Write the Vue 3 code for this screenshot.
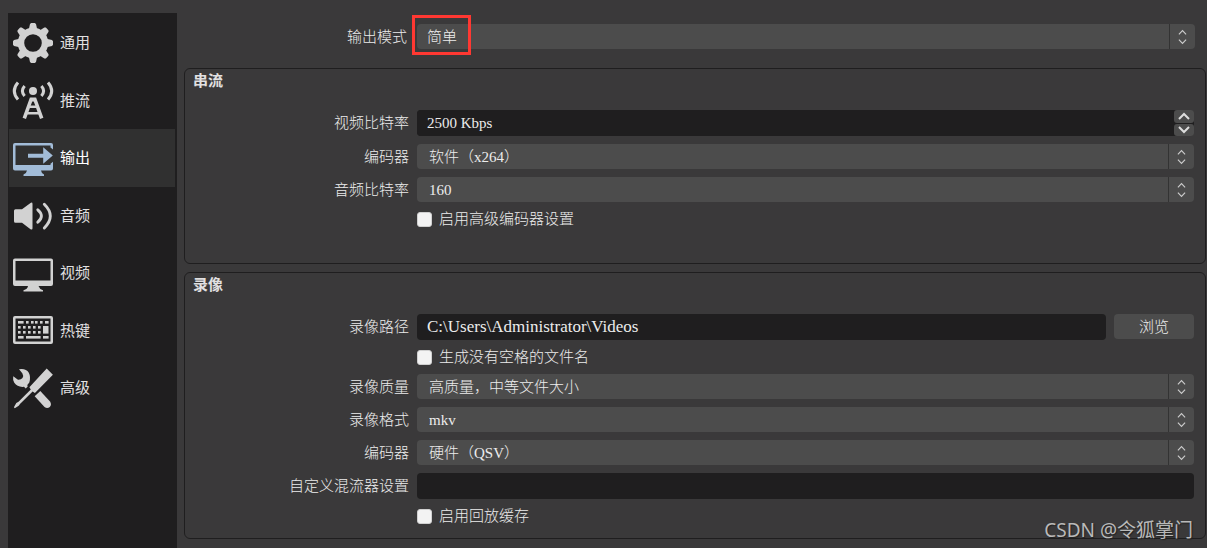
<script setup>
import { ref } from 'vue'

const tabs = [
  { id: 'general', label: '通用' },
  { id: 'stream', label: '推流' },
  { id: 'output', label: '输出' },
  { id: 'audio', label: '音频' },
  { id: 'video', label: '视频' },
  { id: 'hotkeys', label: '热键' },
  { id: 'advanced', label: '高级' },
]
const active = ref('output')

const keys = [
  [5, 10, 5], [13, 10, 2], [18, 10, 2], [22, 10, 2], [27, 10, 2], [32, 10, 3],
  [5, 15, 2], [10, 15, 2], [15, 15, 2], [20, 15, 2], [25, 15, 2],
  [5, 20, 2], [10, 20, 2], [15, 20, 2], [20, 20, 2], [25, 20, 2],
  [5, 25, 5], [13, 25, 14], [30, 25, 5],
]

const mode = ref('简单')
const videoBitrate = ref('2500 Kbps')
const encoder = ref('软件（x264）')
const audioBitrate = ref('160')
const advancedEncoder = ref(false)
const path = ref('C:\\Users\\Administrator\\Videos')
const noSpace = ref(false)
const quality = ref('高质量，中等文件大小')
const format = ref('mkv')
const recEncoder = ref('硬件（QSV）')
const muxer = ref('')
const replay = ref(false)

function step(delta) {
  videoBitrate.value = `${parseInt(videoBitrate.value, 10) + delta} Kbps`
}
</script>

<template>
  <div class="page">
    <nav class="sidebar">
      <button
        v-for="t in tabs"
        :key="t.id"
        type="button"
        class="tab"
        :class="{ active: t.id === active }"
        @click="active = t.id"
      >
        <svg class="icon" viewBox="0 0 40 40" aria-hidden="true">
          <g v-if="t.id === 'general'">
            <circle cx="20" cy="20" r="12" fill="none" stroke="currentColor" stroke-width="6.4" />
            <path
              v-for="n in 8"
              :key="n"
              d="M18.2 0h3.6l1.2 1 1 4.5 3 2.5h-14l3-2.5 1-4.5z"
              fill="currentColor"
              :transform="`rotate(${n * 45} 20 20)`"
            />
          </g>
          <g v-else-if="t.id === 'stream'">
            <circle cx="20" cy="10" r="4" fill="currentColor" />
            <g fill="none" stroke="currentColor">
              <path d="M11.6 5q-4.4 5 0 10M28.4 5q4.4 5 0 10" stroke-width="3" />
              <path d="M5 1.500q-7.400 8.500 0 17M35 1.500q7.400 8.500 0 17" stroke-width="3" />
              <path d="M18.600 17L11.300 37.400M21.400 17L28.700 37.400" stroke-width="3.600" />
              <path d="M17 25.700h6M14 32.200h12" stroke-width="2.600" />
            </g>
            <path d="M17.600 16.500h4.800l1 4h-6.800z" fill="currentColor" />
          </g>
          <g v-else-if="t.id === 'output'" fill="currentColor">
            <path d="M2 5h36a2 2 0 0 1 2 2v4.500l-2.500-2V7.500h-35V27h35v-1.300l2.500-2V30.500a2 2 0 0 1-2 2h-10q.5 3 3 4v1.500H10.500v-1.500q3-1 3.500-4H2a2 2 0 0 1-2-2V7a2 2 0 0 1 2-2z" />
            <path d="M15 15.700h15.200V9.300l9.600 8.200-9.600 8.200v-6H15z" />
          </g>
          <g v-else-if="t.id === 'audio'">
            <path d="M2.500 13.300H9L17.500 6.900q2-.9 2 1v24.400q0 1.800-2 1L9 26.700H2.500q-1.500 0-1.500-1.500V14.800q0-1.500 1.500-1.500z" fill="currentColor" />
            <path d="M24.800 13.800q7.200 6.200 0 12.400M31.300 8.200q12 11.800 0 23.800" fill="none" stroke="currentColor" stroke-width="2.900" stroke-linecap="round" />
          </g>
          <path
            v-else-if="t.id === 'video'"
            fill="currentColor"
            fill-rule="evenodd"
            d="M2 5.500h36a2 2 0 0 1 2 2V31a2 2 0 0 1-2 2H25.500q1 3.200 4.500 4.300v1.200H10.500v-1.200q4-1.100 4.500-4.300H2a2 2 0 0 1-2-2V7.500a2 2 0 0 1 2-2zM2.500 8v19.500h35V8z"
          />
          <g v-else-if="t.id === 'hotkeys'" fill="currentColor">
            <path fill-rule="evenodd" d="M2 5h36a2 2 0 0 1 2 2v24a2 2 0 0 1-2 2H2a2 2 0 0 1-2-2V7a2 2 0 0 1 2-2zM2.500 7.500v23h35v-23z" />
            <rect v-for="(k, i) in keys" :key="i" :x="k[0]" :y="k[1]" :width="k[2] + 0.6" height="2.600" />
            <rect x="30" y="15" width="5.500" height="7.600" />
          </g>
          <g v-else fill="currentColor">
            <path d="M6 1.300Q13 .2 15.800 4.800 18 9 16.300 14.500L14.300 17l.4 1.500-2 2-1.700-1.700Q4.500 19.500 1.300 14.800-.4 11.500.2 8.200L5 11.800q3 .2 4.500-1.800T9.300 5.200z" />
            <path d="M33.700 .6l6.200 6.200-18 18.200-2.300-1.500L7 36l-1.300 1.700L1.800 40.200.9 39.300 3.300 35l2.200-1.200L17.800 21.600l-1.400-2.300z" />
            <path d="M21.700 28.200l5.600-5.200L37 33.500q2 3.200-.2 5.500-2.500 1.800-5.300 0z" />
          </g>
        </svg>
        <span>{{ t.label }}</span>
      </button>
    </nav>

    <main class="content">
      <div class="mode form">
        <label for="mode">输出模式</label>
        <div class="combo">
          <select id="mode" v-model="mode"><option>简单</option></select>
          <svg class="arrows" viewBox="0 0 10 16" aria-hidden="true"><path d="M1 5l4-4 4 4M1 11l4 4 4-4" /></svg>
          <span class="highlight"></span>
        </div>
      </div>

      <section class="group streaming">
        <h2>串流</h2>
        <div class="form">
          <label for="vbr">视频比特率</label>
          <div class="spin">
            <input id="vbr" v-model="videoBitrate" type="text" />
            <div class="steps">
              <button type="button" aria-label="增加" @click="step(50)">
                <svg viewBox="0 0 14 8" aria-hidden="true"><path d="M2 7l5-5 5 5" /></svg>
              </button>
              <button type="button" aria-label="减少" @click="step(-50)">
                <svg viewBox="0 0 14 8" aria-hidden="true"><path d="M2 1l5 5 5-5" /></svg>
              </button>
            </div>
          </div>

          <label for="enc">编码器</label>
          <div class="combo">
            <select id="enc" v-model="encoder"><option>软件（x264）</option></select>
            <svg class="arrows" viewBox="0 0 10 16" aria-hidden="true"><path d="M1 5l4-4 4 4M1 11l4 4 4-4" /></svg>
          </div>

          <label for="abr">音频比特率</label>
          <div class="combo">
            <select id="abr" v-model="audioBitrate"><option>160</option></select>
            <svg class="arrows" viewBox="0 0 10 16" aria-hidden="true"><path d="M1 5l4-4 4 4M1 11l4 4 4-4" /></svg>
          </div>

          <label class="check"><input v-model="advancedEncoder" type="checkbox" />启用高级编码器设置</label>
        </div>
      </section>

      <section class="group">
        <h2>录像</h2>
        <div class="form">
          <label for="path">录像路径</label>
          <div class="browse">
            <input id="path" v-model="path" class="path" type="text" />
            <button type="button">浏览</button>
          </div>

          <label class="check"><input v-model="noSpace" type="checkbox" />生成没有空格的文件名</label>

          <label for="quality">录像质量</label>
          <div class="combo">
            <select id="quality" v-model="quality"><option>高质量，中等文件大小</option></select>
            <svg class="arrows" viewBox="0 0 10 16" aria-hidden="true"><path d="M1 5l4-4 4 4M1 11l4 4 4-4" /></svg>
          </div>

          <label for="format">录像格式</label>
          <div class="combo">
            <select id="format" v-model="format"><option>mkv</option></select>
            <svg class="arrows" viewBox="0 0 10 16" aria-hidden="true"><path d="M1 5l4-4 4 4M1 11l4 4 4-4" /></svg>
          </div>

          <label for="renc">编码器</label>
          <div class="combo">
            <select id="renc" v-model="recEncoder"><option>硬件（QSV）</option></select>
            <svg class="arrows" viewBox="0 0 10 16" aria-hidden="true"><path d="M1 5l4-4 4 4M1 11l4 4 4-4" /></svg>
          </div>

          <label for="muxer">自定义混流器设置</label>
          <input id="muxer" v-model="muxer" type="text" />

          <label class="check"><input v-model="replay" type="checkbox" />启用回放缓存</label>
        </div>
      </section>
    </main>
    <span class="watermark">CSDN @令狐掌门</span>
  </div>
</template>

<style>
body {
  background: #3a393a;
}
</style>

<style scoped>
.page {
  position: relative;
  display: flex;
  gap: 7px;
  box-sizing: border-box;
  min-height: 100vh;
  padding: 13px 1px 0 8px;
  color: #ececec;
  font: 300 15px/18px "Liberation Serif", "Noto Sans CJK SC", sans-serif;
}
.page *,
.page *::before {
  box-sizing: border-box;
}
input,
select,
button {
  min-width: 0;
  margin: 0;
  border: 0;
  color: inherit;
  font: inherit;
}
.sidebar {
  display: flex;
  flex-direction: column;
  flex: none;
  width: 169px;
  padding: 1px 2px 0 1px;
  background: #1f1e1f;
}
.tab {
  display: flex;
  align-items: center;
  gap: 7px;
  height: 58px;
  padding: 0 4px;
  background: none;
  color: #d2d2d2;
  font-family: "Noto Sans CJK SC", sans-serif;
  font-weight: 400;
}
.tab:nth-child(even) {
  height: 57px;
}
.tab span {
  padding-bottom: 2px;
  color: #e1e0e1;
}
.tab.active {
  background: #303030;
  color: #a2bcd8;
}
.tab.active span {
  color: #fff;
}
.icon {
  width: 40px;
  height: 40px;
  overflow: visible;
}
.content {
  flex: 1;
  min-width: 0;
}
.form {
  display: grid;
  grid-template-columns: 224px minmax(0, 1fr);
  gap: 8px;
  align-items: center;
}
.form > label {
  text-align: right;
}
.mode {
  grid-template-columns: 223px minmax(0, 1fr);
  column-gap: 10px;
  padding: 11px 11px 19px 0;
}
.group {
  margin-bottom: 8px;
  padding: 0 11px 13px 0;
  border: 1px solid #1f1e1f;
  border-radius: 6px;
}
.streaming {
  padding-bottom: 35px;
}
h2 {
  height: 22px;
  margin: 0 0 19px;
  padding-left: 8px;
  color: #e1e0e1;
  font: 700 15px/22px "Noto Sans CJK SC", sans-serif;
}
.combo {
  position: relative;
}
select {
  display: block;
  width: 100%;
  height: 25px;
  padding: 0 36px 0 12px;
  border-radius: 4px;
  appearance: none;
  background: linear-gradient(#333, #333) right 25px top / 1px 100% no-repeat #4c4c4c;
}
.mode select {
  padding-left: 10px;
}
.arrows {
  position: absolute;
  top: 5px;
  right: 8px;
  width: 9px;
  height: 16px;
  pointer-events: none;
}
.arrows path {
  fill: none;
  stroke: #ccc;
  stroke-width: 1.3;
}
.highlight {
  position: absolute;
  top: -9px;
  left: -5px;
  width: 59px;
  height: 40px;
  border: 3px solid #ff3832;
  pointer-events: none;
}
input[type="text"] {
  width: 100%;
  height: 26px;
  padding: 0 10px;
  border-radius: 4px;
  background: #1f1e1f;
}
.spin {
  display: flex;
  border-radius: 4px;
  background: #1f1e1f;
}
.steps {
  display: grid;
  grid-template-rows: 1fr 1fr;
  gap: 1px;
  flex: none;
  width: 20px;
}
.steps button {
  display: grid;
  place-items: center;
  padding: 0;
  border-radius: 3px;
  background: #4c4c4c;
}
.steps svg {
  width: 14px;
  height: 8px;
  fill: none;
  stroke: #ddd;
  stroke-width: 2;
}
.browse {
  display: flex;
  gap: 8px;
  align-items: flex-start;
}
.browse input.path {
  flex: 1;
  font-size: 17px;
}
.browse button {
  width: 80px;
  height: 25px;
  border-radius: 4px;
  background: #4c4c4c;
}
.form > .check {
  grid-column: 2;
  display: flex;
  align-items: center;
  gap: 7px;
  text-align: left;
}
.check input {
  width: 15px;
  height: 15px;
  border: 1px solid #d0d0d0;
  border-radius: 3px;
  appearance: none;
  background: #f3f3f3;
}
.check input:checked {
  background: #6c9bd0;
}
.watermark {
  position: absolute;
  right: 14px;
  bottom: 4px;
  color: #b9b9b9;
  font: 400 19px/28px "Noto Sans", "Noto Sans CJK SC", sans-serif;
  text-shadow: 1px 1px 1px #222;
}
</style>
